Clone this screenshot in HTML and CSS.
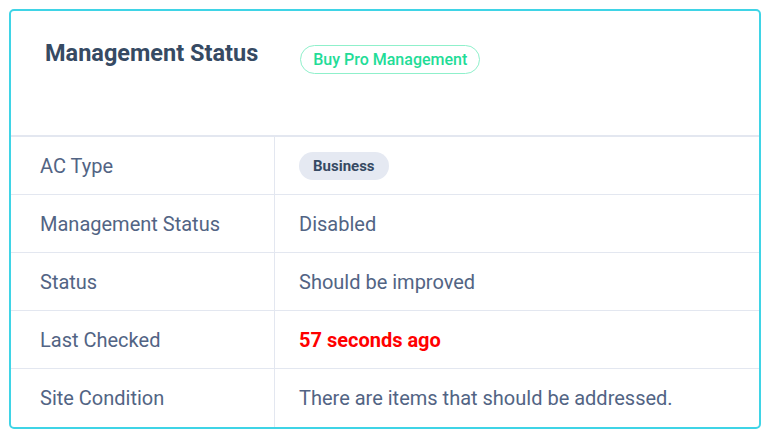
FILE: index.html
```html
<!DOCTYPE html>
<html lang="en">
<head>
    <meta charset="UTF-8">
    <title>Management Status</title>
    <link rel="stylesheet" href="styles.css">
</head>
<body>
    <div class="card">
        <div class="card-head">
            <h2 class="card-title">Management Status</h2>
            <a class="pro-badge" href="#">Buy Pro Management</a>
        </div>
        <div class="info-table">
            <div class="info-row">
                <div class="info-label">AC Type</div>
                <div class="info-value"><span class="type-pill">Business</span></div>
            </div>
            <div class="info-row">
                <div class="info-label">Management Status</div>
                <div class="info-value">Disabled</div>
            </div>
            <div class="info-row">
                <div class="info-label">Status</div>
                <div class="info-value">Should be improved</div>
            </div>
            <div class="info-row">
                <div class="info-label">Last Checked</div>
                <div class="info-value alert">57 seconds ago</div>
            </div>
            <div class="info-row">
                <div class="info-label">Site Condition</div>
                <div class="info-value">There are items that should be addressed.</div>
            </div>
        </div>
    </div>
</body>
</html>
```

FILE: styles.css
```css
body {
    margin: 0;
    background: #ffffff;
    font-family: Roboto, "Liberation Sans", sans-serif;
}

.card {
    margin: 9px 7px 0 9px;
    border: 2px solid #3fd4e6;
    border-radius: 5px;
    background: #fff;
    overflow: hidden;
}

.card-head {
    display: flex;
    align-items: flex-start;
    height: 126px;
    padding: 26px 0 0 34px;
    box-sizing: border-box;
    border-bottom: 2px solid #e3e7f0;
}

.card-title {
    margin: 0;
    font-size: 23.5px;
    line-height: 32px;
    font-weight: 700;
    color: #364a63;
}

.pro-badge {
    margin: 8px 0 0 42px;
    padding: 0 12px;
    height: 29px;
    line-height: 27px;
    box-sizing: border-box;
    border: 1px solid #8ff0cb;
    border-radius: 15px;
    font-size: 16px;
    font-weight: 500;
    color: #22dc97;
    text-decoration: none;
}

.info-row {
    display: grid;
    grid-template-columns: 264px 1fr;
    height: 58px;
    box-sizing: border-box;
    border-bottom: 1px solid #e3e7f0;
    font-size: 20px;
    color: #526484;
}

.info-row:last-child {
    border-bottom: none;
}

.info-label {
    display: flex;
    align-items: center;
    padding-left: 29px;
    border-right: 1px solid #e3e7f0;
}

.info-value {
    display: flex;
    align-items: center;
    padding-left: 24px;
}

.info-value.alert {
    color: #ff0000;
    font-weight: 700;
}

.type-pill {
    height: 28px;
    line-height: 28px;
    padding: 0 14px;
    border-radius: 14px;
    background: #e5e9f2;
    color: #364a63;
    font-size: 15px;
    font-weight: 700;
}
```
